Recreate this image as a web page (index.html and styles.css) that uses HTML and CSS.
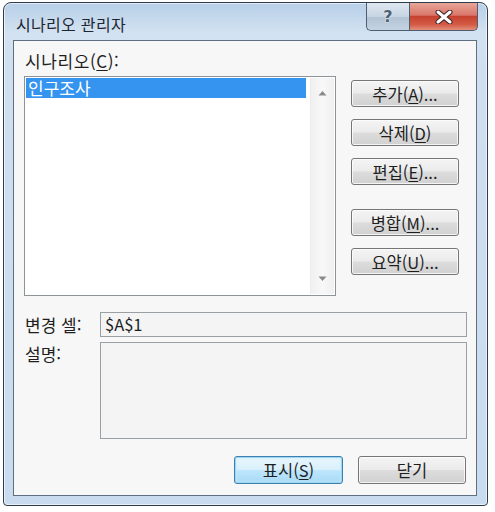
FILE: index.html
```html
<!DOCTYPE html>
<html lang="ko">
<head>
<meta charset="utf-8">
<title>시나리오 관리자</title>
<link rel="stylesheet" href="styles.css">
</head>
<body>
<div class="window">
  <div class="titlebar">
    <div class="title">시나리오 관리자</div>
    <div class="caption">
      <div class="cap-btn help">?</div>
      <div class="cap-btn close">
        <svg width="18" height="14" viewBox="0 0 18 14">
          <path d="M3 2 L15 12 M15 2 L3 12" stroke="#3a2020" stroke-width="5" stroke-linecap="round"/>
          <path d="M3 2 L15 12 M15 2 L3 12" stroke="#ffffff" stroke-width="3" stroke-linecap="round"/>
        </svg>
      </div>
    </div>
  </div>
  <div class="client">
    <div class="top">
      <div class="left">
        <div class="label">시나리오(<u>C</u>):</div>
        <div class="listbox">
          <div class="items">
            <div class="item selected">인구조사</div>
          </div>
          <div class="scrollbar">
            <svg class="arrow" width="9" height="6" viewBox="0 0 9 6"><path d="M0.5 5.5 L4.5 1 L8.5 5.5 Z" fill="#8a8a8a"/></svg>
            <svg class="arrow" width="9" height="6" viewBox="0 0 9 6"><path d="M0.5 0.5 L4.5 5 L8.5 0.5 Z" fill="#8a8a8a"/></svg>
          </div>
        </div>
      </div>
      <div class="side">
        <div class="btn">추가(<u>A</u>)...</div>
        <div class="btn">삭제(<u>D</u>)</div>
        <div class="btn">편집(<u>E</u>)...</div>
        <div class="btn gap">병합(<u>M</u>)...</div>
        <div class="btn">요약(<u>U</u>)...</div>
      </div>
    </div>
    <div class="fields">
      <div class="flabel mid">변경 셀:</div>
      <div class="input">$A$1</div>
      <div class="flabel">설명:</div>
      <div class="textarea"></div>
    </div>
    <div class="bottom">
      <div class="btn wide default">표시(<u>S</u>)</div>
      <div class="btn wide">닫기</div>
    </div>
  </div>
</div>
</body>
</html>
```
FILE: styles.css
```css
* { box-sizing: border-box; }
html, body { margin: 0; padding: 0; background: #ffffff; }
body {
  font-family: "Noto Sans CJK KR", "Noto Sans", sans-serif;
  color: #1e1e1e;
  width: 495px;
  height: 512px;
  overflow: hidden;
}
.window {
  margin: 2px 0 0 3px;
  width: 485px;
  height: 504px;
  border: 1px solid #2f3d4b;
  border-radius: 8px 8px 4px 4px;
  background: linear-gradient(180deg, #b7cfe8 0px, #d3e2f1 30px, #cfdff0 60px, #c9dbee 100%);
  box-shadow: inset 0 0 0 1px rgba(255,255,255,0.6);
  padding: 0 10px 9px 9px;
  display: flex;
  flex-direction: column;
}
.titlebar {
  height: 37px;
  display: flex;
  justify-content: space-between;
  align-items: flex-start;
  margin-right: -1px;
}
.title {
  font-size: 16px;
  line-height: 20px;
  margin: 11px 0 0 3px;
  color: #1c2630;
  letter-spacing: 0.3px;
}
.caption {
  display: flex;
  height: 28px;
}
.cap-btn {
  height: 28px;
  border: 1px solid #4f5e6e;
  border-top: none;
  display: flex;
  align-items: center;
  justify-content: center;
}
.help {
  width: 43px;
  border-radius: 0 0 0 5px;
  border-right: none;
  background: linear-gradient(180deg, #dfe8f1 0%, #c6d4e2 50%, #b2c3d4 51%, #c4d3e2 100%);
  font-family: "DejaVu Sans", sans-serif;
  font-weight: bold;
  font-size: 16px;
  color: #4e6276;
  text-shadow: 0 0 2px #ffffff;
}
.close {
  width: 69px;
  border-radius: 0 0 5px 0;
  background: linear-gradient(180deg, #e8a598 0%, #d9766a 45%, #c6422f 50%, #d45b45 80%, #e2907d 100%);
}
.client {
  flex: 1;
  border: 1px solid #5e6f80;
  background: #f7f7f7;
  display: flex;
  flex-direction: column;
  padding: 10px 0 0 10px;
  font-size: 17px;
}
.top {
  display: flex;
  gap: 15px;
}
.left {
  width: 312px;
}
.label {
  line-height: 20px;
  height: 20px;
  padding-left: 1px;
  letter-spacing: 0.6px;
}
u { text-decoration: underline; text-underline-offset: 2px; text-decoration-thickness: 1px; }
.listbox {
  margin-top: 5px;
  height: 220px;
  border: 1px solid #8e9398;
  background: #ffffff;
  display: flex;
  padding: 1px 1px 1px 1px;
}
.items {
  flex: 1;
  padding-right: 4px;
}
.item {
  height: 20px;
  line-height: 20px;
  padding-left: 2px;
  font-size: 17px;
}
.item.selected {
  background: #3594f0;
  color: #ffffff;
}
.scrollbar {
  width: 24px;
  background: linear-gradient(90deg, #f0f0f0, #f8f8f8 50%, #f0f0f0);
  border-left: 1px solid #ececec;
  display: flex;
  flex-direction: column;
  justify-content: space-between;
  align-items: center;
  padding: 12px 0 12px;
}
.side {
  display: flex;
  flex-direction: column;
  gap: 12px;
  padding-top: 29px;
}
.btn {
  width: 108px;
  height: 27px;
  border: 1px solid #767676;
  border-radius: 3px;
  background: linear-gradient(180deg, #f4f4f4 0%, #ebebeb 48%, #dcdcdc 52%, #d1d1d1 100%);
  box-shadow: inset 0 0 0 1px rgba(255,255,255,0.75);
  display: flex;
  align-items: center;
  justify-content: center;
  font-size: 16.5px;
  line-height: 20px;
  color: #1e1e1e;
}
.btn.gap { margin-top: 12px; }
.fields {
  display: grid;
  grid-template-columns: 76px 367px;
  grid-template-rows: 25px 97px;
  row-gap: 5px;
  margin-top: 16px;
}
.flabel {
  padding-left: 1px;
  line-height: 20px;
  padding-top: 2px;
}
.flabel.mid {
  align-self: center;
  padding-top: 0;
}
.input {
  border: 1px solid #9a9fa4;
  background: #f4f4f4;
  line-height: 20px;
  padding: 1px 4px;
  font-size: 16.5px;
}
.textarea {
  border: 1px solid #9a9fa4;
  background: #f4f4f4;
}
.bottom {
  display: flex;
  justify-content: flex-end;
  gap: 15px;
  margin-top: 17px;
  padding-right: 10px;
}
.btn.wide {
  height: 28px;
}
.btn.default {
  width: 109px;
  border-color: #3c7fb1;
  box-shadow: inset 0 0 0 1px #9fd6f0, inset 0 0 3px 1px #c8ecfa;
  background: linear-gradient(180deg, #eaf6fd 0%, #d9f0fc 48%, #bee6fd 52%, #a7d9f5 100%);
}
```
